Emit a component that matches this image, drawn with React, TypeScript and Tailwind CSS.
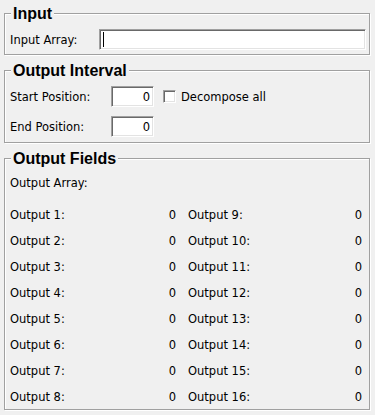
import type { ReactNode } from "react";

const sunken =
  "bg-white border border-t-[#a0a0a0] border-l-[#a0a0a0] border-b-white border-r-white shadow-[inset_1px_1px_0_#696969,inset_-1px_-1px_0_#e3e3e3]";

function Group({
  title,
  className = "",
  children,
}: {
  title: string;
  className?: string;
  children: ReactNode;
}) {
  return (
    <fieldset
      className={`border border-[#a0a0a0] shadow-[1px_1px_0_#fff,inset_1px_1px_0_#fff] ${className}`}
    >
      <legend className="ml-[6px] px-[2px] bg-[#f0f0f0] font-['Liberation_Sans',Arial,sans-serif] font-bold text-[16px] leading-[17px]">
        {title}
      </legend>
      {children}
    </fieldset>
  );
}

function NumberBox() {
  return (
    <div
      className={`w-[43px] h-[21px] flex items-center justify-end pr-[3px] ${sunken}`}
    >
      0
    </div>
  );
}

export default function App() {
  const rows = [1, 2, 3, 4, 5, 6, 7, 8];

  return (
    <div className="w-[375px] h-[415px] bg-[#f0f0f0] pl-[4px] pr-[5px] pt-[5px] font-['DejaVu_Sans',sans-serif] text-[11.5px] text-black leading-[14px]">
      <Group title="Input">
        <div className="flex items-center pt-[7px] pb-[4px] pl-[5px] pr-[3px]">
          <span className="w-[89px] shrink-0">Input Array:</span>
          <div className={`flex-1 h-[21px] pl-[3px] flex items-center ${sunken}`}>
            <span className="w-px h-[15px] bg-black" />
          </div>
        </div>
      </Group>

      <Group title="Output Interval" className="mt-[7px]">
        <div className="flex flex-col gap-[9px] pt-[7px] pb-[5px] pl-[5px]">
          <div className="flex items-center">
            <span className="w-[101px] shrink-0">Start Position:</span>
            <NumberBox />
            <span className={`ml-[9px] w-[13px] h-[13px] ${sunken}`} />
            <span className="ml-[5px]">Decompose all</span>
          </div>
          <div className="flex items-center">
            <span className="w-[101px] shrink-0">End Position:</span>
            <NumberBox />
          </div>
        </div>
      </Group>

      <Group title="Output Fields" className="mt-[7px]">
        <div className="pt-[6px] pb-[2px] pl-[5px] pr-[6px]">
          <div className="h-[20px] flex items-center">Output Array:</div>
          <div className="mt-[12px] grid grid-cols-[166px_174px] gap-x-[12px] gap-y-[6px]">
            {rows.map((i) => [i, i + 8]).flat().map((n) => (
              <div key={n} className="h-[20px] flex items-center justify-between">
                <span>Output {n}:</span>
                <span>0</span>
              </div>
            ))}
          </div>
        </div>
      </Group>
    </div>
  );
}
